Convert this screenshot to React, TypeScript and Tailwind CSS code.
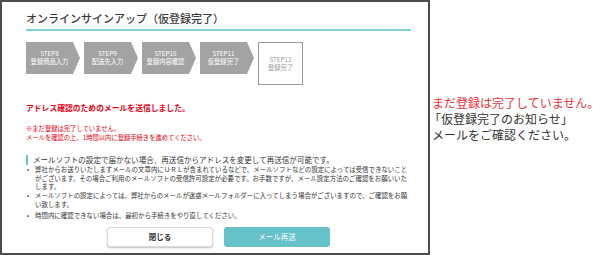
import React from "react";

const steps = [
  { n: "STEP8", t: "登録商品入力" },
  { n: "STEP9", t: "配送先入力" },
  { n: "STEP10", t: "登録内容確認" },
  { n: "STEP11", t: "仮登録完了" },
];

export default function App() {
  return (
    <div
      className="flex w-[600px] h-[255px] bg-white text-[#333] overflow-hidden"
      style={{ fontFamily: '"Noto Sans CJK JP", "Noto Sans", sans-serif' }}
    >
      <div className="w-[430px] shrink-0 h-[255px] border-2 border-[#4d4d4d] pl-[24px] pr-[15px] flex flex-col">
        <div className="pt-[8px] pb-[3px] mr-[2px] border-b-2 border-[#7fd0dc] text-[11px] leading-[16px] font-medium text-[#3a3a3a]">
          オンラインサインアップ（仮登録完了）
        </div>

        <div className="mt-[11px] flex items-start gap-[4px]">
          {steps.map((s) => (
            <div
              key={s.n}
              className="w-[54px] h-[32px] bg-[#a3a3a3] text-white flex flex-col justify-center pr-[7px] [clip-path:polygon(0_0,47px_0,54px_50%,47px_100%,0_100%)]"
            >
              <div className="text-center text-[6.3px] leading-[8px]">{s.n}</div>
              <div className="text-center text-[6.3px] leading-[8px]">{s.t}</div>
            </div>
          ))}
          <div className="w-[45px] h-[43px] border border-[#9a9a9a] text-[#9a9a9a] flex flex-col justify-center">
            <div className="text-center text-[6.3px] leading-[8px]">STEP12</div>
            <div className="text-center text-[6.3px] leading-[8px]">登録完了</div>
          </div>
        </div>

        <div className="mt-[17px] text-[7.8px] leading-[12px] font-bold text-[#e60012]">
          アドレス確認のためのメールを送信しました。
        </div>
        <div className="mt-[10px] text-[6.3px] leading-[9px] text-[#e60012]">
          <div>※まだ登録は完了していません。</div>
          <div>メールを確認の上、1時間以内に登録手続きを進めてください。</div>
        </div>

        <div className="mt-[13px] flex items-center">
          <div className="w-[2px] h-[10px] bg-[#6cc5cc]" />
          <div className="ml-[5px] text-[7.55px] leading-[10px] whitespace-nowrap">
            メールソフトの設定で届かない場合、再送信からアドレスを変更して再送信が可能です。
          </div>
        </div>

        <ul className="mt-[1px] text-[6.45px] leading-[8.7px] whitespace-nowrap">
          <li className="flex mb-[0.3px]">
            <span className="w-[9px] shrink-0 pl-[1px]">•</span>
            <span>
              弊社からお送りいたしますメールの文章内にＵＲＬが含まれているなどで、メールソフトなどの設定によっては受信できないこと
              <br />
              がございます。その場合ご利用のメールソフトの受信許可設定が必要です。お手数ですが、メール設定方法のご確認をお願いいた
              <br />
              します。
            </span>
          </li>
          <li className="flex mb-[2px]">
            <span className="w-[9px] shrink-0 pl-[1px]">•</span>
            <span>
              メールソフトの設定によっては、弊社からのメールが迷惑メールフォルダーに入ってしまう場合がございますので、ご確認をお願
              <br />
              い致します。
            </span>
          </li>
          <li className="flex">
            <span className="w-[9px] shrink-0 pl-[1px]">•</span>
            <span>時間内に確認できない場合は、最初から手続きをやり直してください。</span>
          </li>
        </ul>

        <div className="mt-auto mb-[6px] mr-[2px] flex justify-center gap-[11px]">
          <button className="w-[106px] h-[20px] rounded-[3px] bg-white border border-[#dcdcdc] shadow-[0_1px_2px_rgba(0,0,0,0.25)] text-[7.5px] font-bold text-[#333]">
            閉じる
          </button>
          <button className="w-[106px] h-[20px] rounded-[3px] bg-[#66c2c8] text-[7.5px] text-white">
            メール再送
          </button>
        </div>
      </div>

      <div className="pl-[2px] pt-[95px] text-[12px] leading-[16px] whitespace-nowrap">
        <div className="text-[#e8323a]">まだ登録は完了していません。</div>
        <div className="text-[#333] -ml-[3px]">「仮登録完了のお知らせ」</div>
        <div className="text-[#333]">メールをご確認ください。</div>
      </div>
    </div>
  );
}
